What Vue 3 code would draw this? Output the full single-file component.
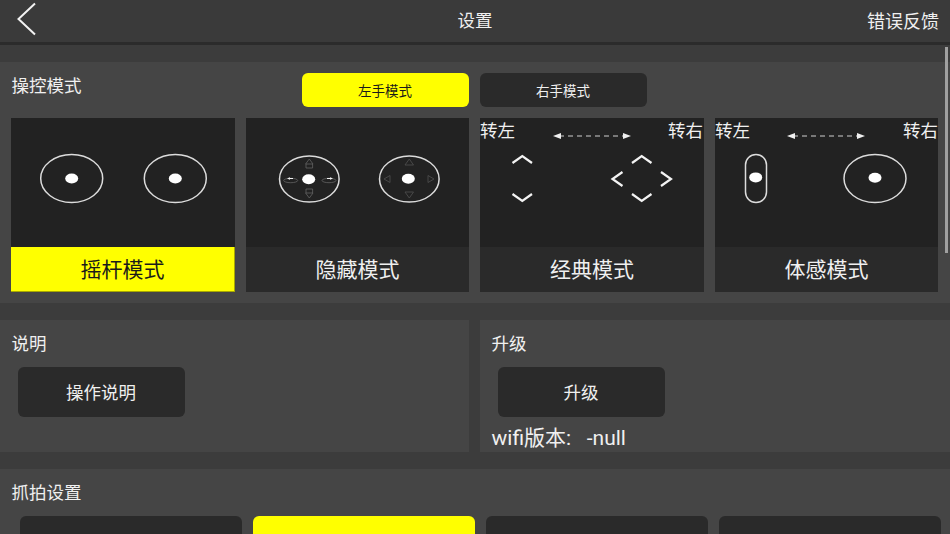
<script setup>
const captureOptions = [{ active: false }, { active: true }, { active: false }, { active: false }]
</script>

<template>
  <div class="app">
    <header class="topbar">
      <svg class="back" viewBox="0 0 24 36" width="24" height="36">
        <path d="M23 1.5 L6.5 17 L23 32.5" fill="none" stroke="#f2f2f2" stroke-width="2" />
      </svg>
      <span class="title">设置</span>
      <span class="feedback">错误反馈</span>
    </header>

    <main class="main">
      <section class="panel modes">
        <div class="modes-head">
          <span class="label head-label">操控模式</span>
          <button class="hand active">左手模式</button>
          <button class="hand">右手模式</button>
        </div>
        <div class="cards">
          <div class="card selected">
            <div class="preview">
              <svg viewBox="0 0 224 129" width="224" height="129">
                <ellipse class="ring" cx="60.7" cy="60.5" rx="31" ry="24" />
                <ellipse class="dot" cx="60.7" cy="60.5" rx="6.5" ry="5" />
                <ellipse class="ring" cx="164.3" cy="60.5" rx="31" ry="24" />
                <ellipse class="dot" cx="164.3" cy="60.5" rx="6.5" ry="5" />
              </svg>
            </div>
            <div class="card-name">摇杆模式</div>
          </div>

          <div class="card">
            <div class="preview">
              <svg viewBox="0 0 224 129" width="224" height="129">
                <ellipse class="ring" cx="63.3" cy="61" rx="29.8" ry="23" />
                <ellipse class="dot" cx="62.7" cy="61.3" rx="6.5" ry="5" />
                <path class="dim-strong" d="M63.3 41 L67 46 H59.6 Z M60 46 V50 H66.6 V46" />
                <path class="dim-strong" d="M63.3 80 L67 75 H59.6 Z M60 75 V71 H66.6 V75" />
                <ellipse class="dim-strong" cx="44.7" cy="62.5" rx="7" ry="2.2" />
                <ellipse class="dim-strong" cx="83" cy="62.5" rx="7" ry="2.2" />
                <path class="tick" d="M41 60.5 L44 59.2 V60 H47 V61 H44 V61.8 Z" />
                <path class="tick" d="M87 60.5 L84 59.2 V60 H81 V61 H84 V61.8 Z" />
                <ellipse class="ring" cx="163.3" cy="61" rx="29.8" ry="23" />
                <ellipse class="dot" cx="162.3" cy="60.7" rx="6.5" ry="5" />
                <path class="dim" d="M163.3 41 L167.5 47 H159 Z" />
                <path class="dim" d="M163.3 80 L167.5 74 H159 Z" />
                <path class="dim" d="M138 61 L144 57.5 V64.5 Z" />
                <path class="dim" d="M188 61 L182 57.5 V64.5 Z" />
              </svg>
            </div>
            <div class="card-name">隐藏模式</div>
          </div>

          <div class="card">
            <div class="preview">
              <div class="turns"><span>转左</span><span>转右</span></div>
              <svg viewBox="0 0 224 129" width="224" height="129">
                <path class="dash" d="M79 18 H145" />
                <path class="tick" d="M73 18 L81 15 V21 Z M151 18 L143 15 V21 Z" />
                <path class="chev" d="M32.5 45 L42.3 38 L52 45" />
                <path class="chev" d="M32.5 76 L42.3 83 L52 76" />
                <path class="chev" d="M152 45 L161.7 38 L171.5 45" />
                <path class="chev" d="M152 76 L161.7 83 L171.5 76" />
                <path class="chev" d="M142.5 54 L132.5 61 L142.5 68" />
                <path class="chev" d="M181 54 L191 61 L181 68" />
              </svg>
            </div>
            <div class="card-name">经典模式</div>
          </div>

          <div class="card">
            <div class="preview">
              <div class="turns last"><span>转左</span><span>转右</span></div>
              <svg viewBox="0 0 224 129" width="224" height="129">
                <path class="dash" d="M78 18 H144" />
                <path class="tick" d="M72 18 L80 15 V21 Z M150 18 L142 15 V21 Z" />
                <rect class="ring" x="30.5" y="36.5" width="21" height="48" rx="10.5" />
                <ellipse class="dot" cx="40.7" cy="59.4" rx="6.5" ry="5" />
                <ellipse class="ring" cx="160" cy="60.5" rx="31" ry="24" />
                <ellipse class="dot" cx="160" cy="59.7" rx="6.5" ry="5" />
              </svg>
            </div>
            <div class="card-name">体感模式</div>
          </div>
        </div>
      </section>

      <div class="info-row">
        <section class="panel info">
          <div class="label">说明</div>
          <button class="action">操作说明</button>
        </section>
        <section class="panel info">
          <div class="label">升级</div>
          <button class="action">升级</button>
          <div class="version">wifi版本:&nbsp;&nbsp;&nbsp;-null</div>
        </section>
      </div>

      <section class="panel capture">
        <div class="label">抓拍设置</div>
        <div class="capture-row">
          <button
            v-for="(opt, i) in captureOptions"
            :key="i"
            class="capture-btn"
            :class="{ active: opt.active }"
          ></button>
        </div>
      </section>
    </main>

    <div class="scrollbar"></div>
  </div>
</template>

<style scoped>
.app {
  position: relative;
  width: 950px;
  height: 534px;
  overflow: hidden;
  background: #3c3c3c;
  color: #f0f0f0;
  font-family: Roboto, "Noto Sans CJK SC", sans-serif;
  font-size: 17.5px;
}
.topbar {
  position: relative;
  display: flex;
  align-items: center;
  justify-content: space-between;
  box-sizing: border-box;
  height: 45px;
  padding: 0 11px 3px 12px;
  background: #3a3a3a;
  border-bottom: 3px solid #2b2b2b;
}
.back {
  display: block;
}
.feedback {
  font-size: 18px;
}
.title {
  position: absolute;
  left: 0;
  right: 0;
  text-align: center;
  font-size: 17.5px;
  pointer-events: none;
}
.main {
  padding-top: 17px;
}
.panel {
  background: #454545;
  box-sizing: border-box;
}
.label {
  line-height: 26px;
  padding-left: 11.5px;
}
.modes {
  height: 241px;
  padding-top: 11px;
}
.modes-head {
  display: flex;
  align-items: flex-start;
  height: 34px;
  margin-bottom: 11px;
}
.head-label {
  width: 302px;
  box-sizing: border-box;
}
.hand {
  width: 167px;
  height: 34px;
  margin-right: 11px;
  padding: 0 1px 0 0;
  border: 0;
  border-radius: 6px;
  background: #2a2a2a;
  color: #f0f0f0;
  font: inherit;
  font-size: 13.5px;
}
.hand.active {
  background: #ffff00;
  color: #1a1a1a;
}
.cards {
  display: grid;
  grid-template-columns: 224px 223px 224px 223px;
  column-gap: 11px;
  padding-left: 11px;
}
.card {
  height: 174px;
  background: #2a2a2a;
}
.preview {
  position: relative;
  height: 129px;
  overflow: hidden;
  background: #222222;
}
.preview svg {
  display: block;
}
.turns {
  position: absolute;
  top: 0;
  left: 0;
  right: 0;
  display: flex;
  justify-content: space-between;
  font-size: 17.5px;
  line-height: 26px;
  padding: 0 1px 0 0;
}
.turns.last {
  padding-right: 0;
}
.card-name {
  height: 45px;
  line-height: 47px;
  text-align: center;
  font-size: 21px;
}
.card.selected .card-name {
  background: #ffff00;
  color: #1a1a1a;
  border-right: 1px solid #a8a800;
  border-bottom: 1px solid #a8a800;
  box-sizing: border-box;
}
.ring {
  fill: none;
  stroke: #dcdcdc;
  stroke-width: 1.5;
}
.dot {
  fill: #ffffff;
}
.dim {
  fill: none;
  stroke: #4c4c4c;
  stroke-width: 0.9;
}
.dim-strong {
  fill: none;
  stroke: #636363;
  stroke-width: 0.8;
}
.tick {
  fill: #f0f0f0;
}
.dash {
  fill: none;
  stroke: #cfcfcf;
  stroke-width: 1;
  stroke-dasharray: 5 4;
}
.chev {
  fill: none;
  stroke: #f4f4f4;
  stroke-width: 2.2;
}
.info-row {
  display: grid;
  grid-template-columns: 469px 470px;
  column-gap: 11px;
  margin-top: 17px;
}
.info {
  height: 132px;
  padding-top: 11px;
  overflow: hidden;
}
.action {
  display: block;
  width: 167px;
  height: 50px;
  margin: 10px 0 0 18px;
  padding: 0 1px 2px 0;
  border: 0;
  border-radius: 6px;
  background: #2a2a2a;
  color: #f0f0f0;
  font: inherit;
}
.version {
  margin-top: 8px;
  padding-left: 11.5px;
  font-size: 21px;
  line-height: 26px;
}
.capture {
  height: 120px;
  margin-top: 17px;
  padding-top: 11px;
}
.capture-row {
  display: flex;
  gap: 11px;
  margin-top: 10px;
  padding-left: 20px;
}
.capture-btn {
  width: 222px;
  height: 50px;
  padding: 0;
  border: 0;
  border-radius: 6px;
  background: #2a2a2a;
}
.capture-btn.active {
  background: #ffff00;
}
.scrollbar {
  position: absolute;
  top: 47px;
  left: 945px;
  width: 3px;
  height: 206px;
  background: #a0a0a0;
}
</style>
